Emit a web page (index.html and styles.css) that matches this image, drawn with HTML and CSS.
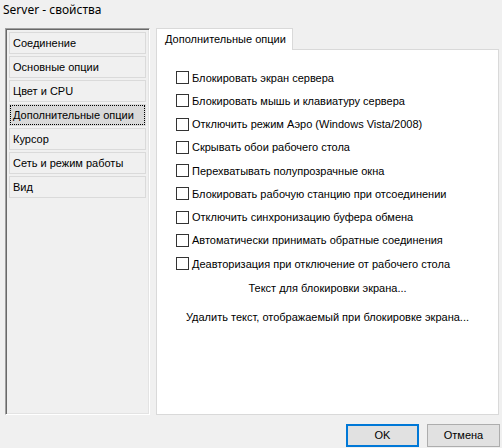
FILE: index.html
```html
<!DOCTYPE html>
<html>
<head>
<meta charset="utf-8">
<link rel="stylesheet" href="styles.css">
</head>
<body>
<div class="window">
  <div class="title">Server - свойства</div>
  <div class="main">
    <div class="nav">
      <div class="nav-item">Соединение</div>
      <div class="nav-item">Основные опции</div>
      <div class="nav-item">Цвет и CPU</div>
      <div class="nav-item selected">Дополнительные опции</div>
      <div class="nav-item">Курсор</div>
      <div class="nav-item">Сеть и режим работы</div>
      <div class="nav-item">Вид</div>
    </div>
    <div class="content">
      <div class="tabs"><div class="tab">Дополнительные опции</div></div>
      <div class="panel">
        <div class="options">
          <label class="opt"><span class="box"></span>Блокировать экран сервера</label>
          <label class="opt"><span class="box"></span>Блокировать мышь и клавиатуру сервера</label>
          <label class="opt"><span class="box"></span>Отключить режим Аэро (Windows Vista/2008)</label>
          <label class="opt"><span class="box"></span>Скрывать обои рабочего стола</label>
          <label class="opt"><span class="box"></span>Перехватывать полупрозрачные окна</label>
          <label class="opt"><span class="box"></span>Блокировать рабочую станцию при отсоединении</label>
          <label class="opt"><span class="box"></span>Отключить синхронизацию буфера обмена</label>
          <label class="opt"><span class="box"></span>Автоматически принимать обратные соединения</label>
          <label class="opt"><span class="box"></span>Деавторизация при отключение от рабочего стола</label>
        </div>
        <div class="link first">Текст для блокировки экрана...</div>
        <div class="link">Удалить текст, отображаемый при блокировке экрана...</div>
      </div>
    </div>
  </div>
  <div class="buttons">
    <div class="btn default">OK</div>
    <div class="btn">Отмена</div>
  </div>
</div>
</body>
</html>
```
FILE: styles.css
```css
html, body {
  margin: 0;
  padding: 0;
  background: #f0f0f0;
}
.window {
  width: 502px;
  height: 448px;
  display: flex;
  flex-direction: column;
  font-family: "Liberation Sans", Arial, sans-serif;
  font-size: 11px;
  color: #000;
  overflow: hidden;
}
.title {
  height: 28px;
  padding-left: 3px;
  line-height: 20px;
  font-family: "Noto Sans", "Open Sans", sans-serif;
  font-size: 12px;
  color: #000;
  box-sizing: border-box;
}
.main {
  display: flex;
  margin-left: 5px;
  height: 387px;
  gap: 6px;
}
.nav {
  width: 145px;
  box-sizing: border-box;
  border: 1px solid;
  border-color: #a0a0a0 #ffffff #ffffff #a0a0a0;
  box-shadow: inset 1px 1px 0 #696969, inset -1px -1px 0 #e3e3e3;
  padding: 3px 3px 0 3px;
  display: flex;
  flex-direction: column;
  gap: 2px;
}
.nav-item {
  height: 22px;
  box-sizing: border-box;
  border: 1px solid #dadada;
  background: #f0f0f0;
  padding-left: 3px;
  line-height: 20px;
}
.nav-item.selected {
  background: #d9d9d9;
  outline: 1px dotted #000;
  outline-offset: -2px;
}
.content {
  width: 343px;
  display: flex;
  flex-direction: column;
}
.tabs {
  display: flex;
  height: 21px;
}
.tab {
  width: 137px;
  box-sizing: border-box;
  border: 1px solid #d9d9d9;
  border-bottom: none;
  background: #fff;
  padding-left: 8px;
  line-height: 21px;
  position: relative;
  z-index: 1;
  height: 22px;
}
.panel {
  flex: 1;
  box-sizing: border-box;
  border: 1px solid #d9d9d9;
  background: #fff;
  padding: 16px 0 0 19px;
  display: flex;
  flex-direction: column;
}
.options {
  display: flex;
  flex-direction: column;
}
.opt {
  height: 23.25px;
  display: flex;
  align-items: center;
}
.box {
  width: 13px;
  height: 13px;
  box-sizing: border-box;
  border: 1px solid #333;
  background: #fff;
  margin-right: 3px;
  flex: none;
}
.link {
  text-align: center;
  margin-left: -19px;
  line-height: 14px;
  margin-top: 15px;
}
.link.first {
  margin-top: 6px;
}
.buttons {
  display: flex;
  justify-content: flex-end;
  gap: 8px;
  padding: 9px 2px 0 0;
}
.btn {
  width: 73px;
  height: 23px;
  box-sizing: border-box;
  border: 1px solid #adadad;
  background: #e1e1e1;
  text-align: center;
  line-height: 21px;
}
.btn.default {
  border: 2px solid #0078d7;
  line-height: 19px;
}
```
